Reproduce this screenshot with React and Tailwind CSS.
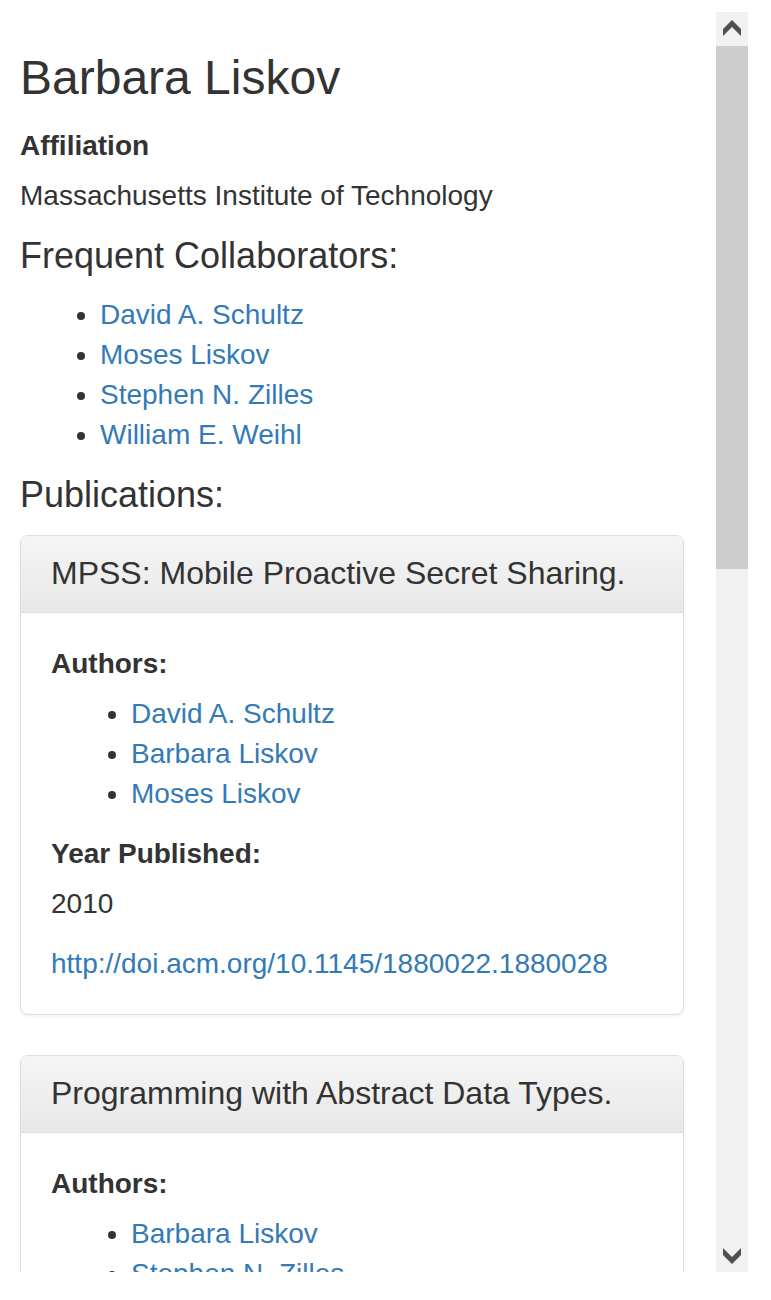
const collaborators = [
  "David A. Schultz",
  "Moses Liskov",
  "Stephen N. Zilles",
  "William E. Weihl",
];

const publications = [
  {
    title: "MPSS: Mobile Proactive Secret Sharing.",
    authors: ["David A. Schultz", "Barbara Liskov", "Moses Liskov"],
    year: 2010,
    url: "http://doi.acm.org/10.1145/1880022.1880028",
  },
  {
    title: "Programming with Abstract Data Types.",
    authors: ["Barbara Liskov", "Stephen N. Zilles"],
    year: 1974,
    url: "http://doi.acm.org/10.1145/942572.807045",
  },
];

function NameList({ names }) {
  return (
    <ul className="list-disc pl-[80px] mb-[20px]">
      {names.map((n) => (
        <li key={n}>
          <a href="#" className="text-[#337ab7]">
            {n}
          </a>
        </li>
      ))}
    </ul>
  );
}

function Panel({ pub }) {
  return (
    <div className="mb-[40px] rounded-[8px] border border-[#ddd] bg-white shadow-[0_2px_4px_rgba(0,0,0,0.05)]">
      <div className="rounded-t-[6px] border-b border-[#ddd] bg-[linear-gradient(to_bottom,#f5f5f5_0%,#e8e8e8_100%)] px-[30px] pt-[20px] pb-[21px]">
        <h3 className="text-[32px] leading-[1.1] font-normal">{pub.title}</h3>
      </div>
      <div className="px-[30px] pt-[31px] pb-[30px]">
        <label className="block font-bold mb-[10px]">Authors:</label>
        <NameList names={pub.authors} />
        <label className="block font-bold mb-[10px]">Year Published:</label>
        <p className="mb-[20px]">{pub.year}</p>
        <a href="#" className="block text-[#337ab7]">
          {pub.url}
        </a>
      </div>
    </div>
  );
}

function Arrow({ down }) {
  return (
    <svg width="18" height="16" viewBox="0 0 18 16" className={down ? "rotate-180" : ""}>
      <polygon points="9,0 18,9 18,16 9,7 0,16 0,9" fill="#505050" />
    </svg>
  );
}

function Scrollbar() {
  return (
    <div className="flex h-full w-[32px] flex-col bg-[#f1f1f1]">
      <div className="flex h-[34px] justify-center pt-[8px]">
        <Arrow />
      </div>
      <div className="h-[523px] bg-[#cdcdcd]" />
      <div className="flex-1" />
      <div className="flex h-[34px] items-end justify-center pb-[8px]">
        <Arrow down />
      </div>
    </div>
  );
}

export default function App() {
  return (
    <div className="min-h-[1300px] bg-white pt-[12px] font-['Liberation_Sans',Arial,sans-serif] text-[28px] leading-[40px] text-[#333]">
      <div className="flex h-[1260px] w-[748px]">
        <div className="h-full w-[716px] overflow-hidden pl-[20px] pr-[32px]">
          <h1 className="mt-[40px] mb-[21px] text-[48px] leading-[1.1] font-normal">
            Barbara Liskov
          </h1>
          <label className="block font-bold mb-[10px]">Affiliation</label>
          <p className="mb-[20px]">Massachusetts Institute of Technology</p>
          <h4 className="mb-[20px] text-[36px] leading-[1.1] font-normal">
            Frequent Collaborators:
          </h4>
          <NameList names={collaborators} />
          <h4 className="mb-[20px] text-[36px] leading-[1.1] font-normal">
            Publications:
          </h4>
          {publications.map((p) => (
            <Panel key={p.title} pub={p} />
          ))}
        </div>
        <Scrollbar />
      </div>
    </div>
  );
}
